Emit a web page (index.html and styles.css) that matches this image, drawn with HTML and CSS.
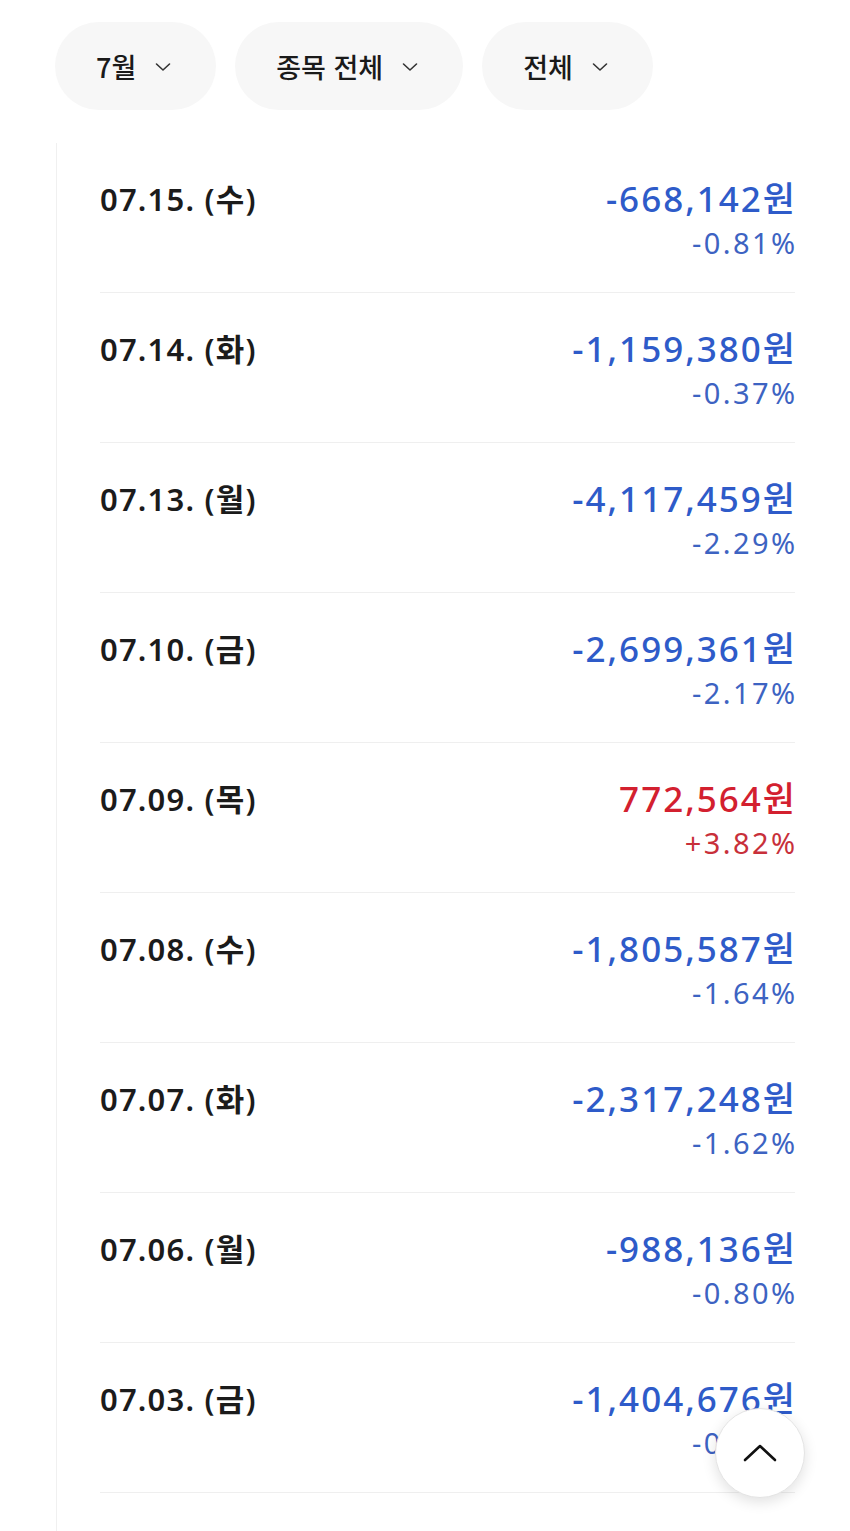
FILE: index.html
```html
<!DOCTYPE html>
<html lang="ko">
<head>
    <meta charset="UTF-8">
    <meta name="viewport" content="width=device-width, initial-scale=1.0">
    <title>일별 손익</title>
    <link rel="stylesheet" href="styles.css">
</head>
<body>
    <!-- Filters -->
    <div class="filters">
        <button class="pill">7월 <span class="chev"><svg viewBox="0 0 18 18" width="18" height="18"><path d="M2.5 6 L9 12 L15.5 6" fill="none" stroke="#333" stroke-width="1.6" stroke-linecap="round" stroke-linejoin="round"/></svg></span></button>
        <button class="pill">종목 전체 <span class="chev"><svg viewBox="0 0 18 18" width="18" height="18"><path d="M2.5 6 L9 12 L15.5 6" fill="none" stroke="#333" stroke-width="1.6" stroke-linecap="round" stroke-linejoin="round"/></svg></span></button>
        <button class="pill">전체 <span class="chev"><svg viewBox="0 0 18 18" width="18" height="18"><path d="M2.5 6 L9 12 L15.5 6" fill="none" stroke="#333" stroke-width="1.6" stroke-linecap="round" stroke-linejoin="round"/></svg></span></button>
    </div>

    <!-- Daily list -->
    <div class="list">
        <div class="row">
            <div class="date">07.15. (수)</div>
            <div class="value minus"><div class="amount">-668,142원</div><div class="rate">-0.81%</div></div>
        </div>
        <div class="row">
            <div class="date">07.14. (화)</div>
            <div class="value minus"><div class="amount">-1,159,380원</div><div class="rate">-0.37%</div></div>
        </div>
        <div class="row">
            <div class="date">07.13. (월)</div>
            <div class="value minus"><div class="amount">-4,117,459원</div><div class="rate">-2.29%</div></div>
        </div>
        <div class="row">
            <div class="date">07.10. (금)</div>
            <div class="value minus"><div class="amount">-2,699,361원</div><div class="rate">-2.17%</div></div>
        </div>
        <div class="row">
            <div class="date">07.09. (목)</div>
            <div class="value plus"><div class="amount">772,564원</div><div class="rate">+3.82%</div></div>
        </div>
        <div class="row">
            <div class="date">07.08. (수)</div>
            <div class="value minus"><div class="amount">-1,805,587원</div><div class="rate">-1.64%</div></div>
        </div>
        <div class="row">
            <div class="date">07.07. (화)</div>
            <div class="value minus"><div class="amount">-2,317,248원</div><div class="rate">-1.62%</div></div>
        </div>
        <div class="row">
            <div class="date">07.06. (월)</div>
            <div class="value minus"><div class="amount">-988,136원</div><div class="rate">-0.80%</div></div>
        </div>
        <div class="row">
            <div class="date">07.03. (금)</div>
            <div class="value minus"><div class="amount">-1,404,676원</div><div class="rate">-0.91%</div></div>
        </div>
    </div>

    <!-- Scroll to top -->
    <button class="to-top">
        <svg viewBox="0 0 40 40" width="40" height="40"><path d="M5 27 L20 13 L35 27" fill="none" stroke="#111" stroke-width="2.6" stroke-linecap="round" stroke-linejoin="round"/></svg>
    </button>
</body>
</html>
```

FILE: styles.css
```css
/* General */
body {
    margin: 0;
    background: #fff;
    color: #191919;
    font-family: "Noto Sans", "Noto Sans CJK KR", sans-serif;
}

/* Filter pills */
.filters {
    display: flex;
    gap: 19px;
    padding: 22px 0 0 55px;
    height: 88px;
}

.pill {
    display: flex;
    align-items: center;
    height: 88px;
    border: none;
    border-radius: 44px;
    background: #f7f7f7;
    font-family: "Noto Sans CJK KR", sans-serif;
    font-size: 27px;
    font-weight: 500;
    color: #1a1a1a;
    padding: 0 44px 0 41px;
    gap: 18px;
}

.chev {
    display: flex;
    margin-top: 2px;
}

/* List */
.list {
    margin: 33px 0 0 56px;
    border-left: 1.5px solid #f0f0f0;
    padding: 0 55px 0 43px;
    min-height: 1400px;
}

.row {
    display: flex;
    justify-content: space-between;
    align-items: flex-start;
    height: 150px;
    padding-top: 34px;
    box-sizing: border-box;
    border-bottom: 1px solid #efefef;
}

.date {
    font-size: 31px;
    line-height: 44px;
    font-weight: 600;
    color: #1b1b1b;
    letter-spacing: 1.2px;
}

.value {
    text-align: right;
}

.amount {
    font-size: 35px;
    line-height: 44px;
    font-weight: 500;
    letter-spacing: 2px;
    margin-right: -2px;
}

.rate {
    font-size: 29px;
    line-height: 44px;
    font-weight: 400;
    letter-spacing: 2.4px;
    margin-right: -2.4px;
}

.minus .amount {
    color: #2e5bc9;
}

.minus .rate {
    color: #3d63c2;
}

.plus .amount {
    color: #d3202f;
}

.plus .rate {
    color: #c8303a;
}

/* Scroll to top button */
.to-top {
    position: fixed;
    right: 45px;
    bottom: 33px;
    width: 90px;
    height: 90px;
    border-radius: 50%;
    background: #fff;
    border: 1px solid #e4e4e4;
    box-shadow: 0 4px 14px rgba(0, 0, 0, 0.12);
    display: flex;
    justify-content: center;
    align-items: center;
    padding: 0;
}
```
